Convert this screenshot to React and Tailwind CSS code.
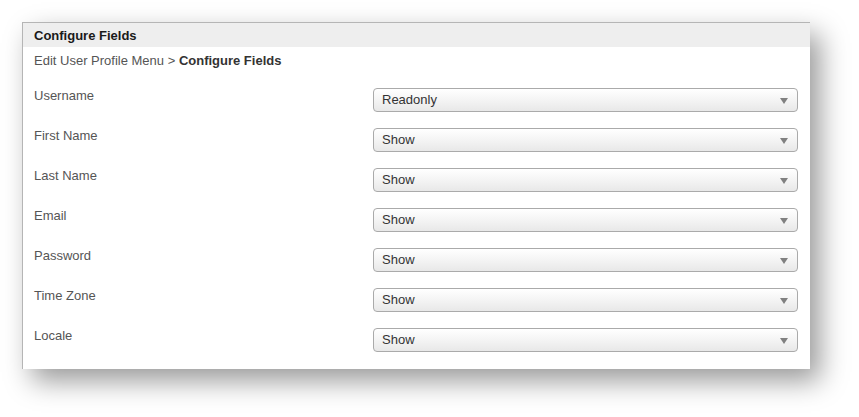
import React from "react";

const fields = [
  { label: "Username", value: "Readonly" },
  { label: "First Name", value: "Show" },
  { label: "Last Name", value: "Show" },
  { label: "Email", value: "Show" },
  { label: "Password", value: "Show" },
  { label: "Time Zone", value: "Show" },
  { label: "Locale", value: "Show" },
];

function SelectBox({ value }) {
  return (
    <div className="relative flex items-center h-[24px] w-[425px] rounded-[4px] border border-[#aaaaaa] bg-linear-to-b from-[#ffffff] via-[#f4f4f4] to-[#e8e8e8] pl-[8px] text-[13px] text-[#333333]">
      <span>{value}</span>
      {/* dropdown arrow */}
      <svg className="absolute right-[9px] top-[9px]" width="8" height="6" viewBox="0 0 8 6">
        <path d="M0 0 L8 0 L4 6 Z" fill="#808080" />
      </svg>
    </div>
  );
}

export default function App() {
  return (
    <div className="w-[859px] h-[417px] bg-white pt-[22px] pl-[22px] font-['Liberation_Sans',Arial,sans-serif]">
      <div className="w-[788px] h-[347px] bg-white border-l border-t border-[#b5b5b5] shadow-[10px_12px_26px_rgba(0,0,0,0.4)]">
        {/* Header */}
        <div className="h-[24px] bg-[#eeeeee] pl-[11px] pt-[1px] flex items-center text-[13px] font-bold text-[#1a1a1a]">
          Configure Fields
        </div>

        {/* Breadcrumb */}
        <div className="pl-[11px] pt-[6px] leading-[16px] text-[13px] text-[#555555]">
          Edit User Profile Menu &gt; <span className="font-bold text-[#333333]">Configure Fields</span>
        </div>

        {/* Field rows */}
        <div className="pl-[11px] pr-[12px] pt-[19px] flex flex-col gap-[16px]">
          {fields.map((f) => (
            <div key={f.label} className="flex items-start justify-between h-[24px]">
              <span className="text-[13px] leading-[14px] pt-[1px] text-[#555555]">{f.label}</span>
              <SelectBox value={f.value} />
            </div>
          ))}
        </div>
      </div>
    </div>
  );
}
